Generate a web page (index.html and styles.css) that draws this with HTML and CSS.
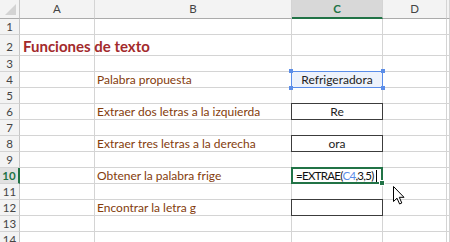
FILE: index.html
```html
<!DOCTYPE html>
<html lang="es">
<head>
<meta charset="utf-8">
<title>Funciones de texto</title>
<link rel="stylesheet" href="styles.css">
</head>
<body>
<div class="sheet">
  <div class="corner"><span class="tri"></span></div>
  <div class="ch">A</div><div class="ch">B</div><div class="ch ch-on">C</div><div class="ch">D</div><div class="ch"></div>

  <div class="rh">1</div><div class="c"></div><div class="c"></div><div class="c"></div><div class="c"></div><div class="c"></div>
  <div class="rh r2">2</div><div class="c title">Funciones de texto</div><div class="c"></div><div class="c"></div><div class="c"></div><div class="c"></div>
  <div class="rh">3</div><div class="c"></div><div class="c"></div><div class="c"></div><div class="c"></div><div class="c"></div>
  <div class="rh">4</div><div class="c"></div><div class="c label">Palabra propuesta</div><div class="c val sel">Refrigeradora<i class="h h1"></i><i class="h h2"></i><i class="h h3"></i><i class="h h4"></i></div><div class="c"></div><div class="c"></div>
  <div class="rh">5</div><div class="c"></div><div class="c"></div><div class="c"></div><div class="c"></div><div class="c"></div>
  <div class="rh">6</div><div class="c"></div><div class="c label">Extraer dos letras a la izquierda</div><div class="c val box">Re</div><div class="c"></div><div class="c"></div>
  <div class="rh">7</div><div class="c"></div><div class="c"></div><div class="c"></div><div class="c"></div><div class="c"></div>
  <div class="rh">8</div><div class="c"></div><div class="c label">Extraer tres letras a la derecha</div><div class="c val box">ora</div><div class="c"></div><div class="c"></div>
  <div class="rh">9</div><div class="c"></div><div class="c"></div><div class="c"></div><div class="c"></div><div class="c"></div>
  <div class="rh rh-on">10</div><div class="c"></div><div class="c label">Obtener la palabra frige</div><div class="c active"><span class="f">=EXTRAE(<span class="ref">C4</span>,3,5)</span><span class="caret"></span><i class="fill"></i></div><div class="c"></div><div class="c"></div>
  <div class="rh">11</div><div class="c"></div><div class="c"></div><div class="c"></div><div class="c"></div><div class="c"></div>
  <div class="rh">12</div><div class="c"></div><div class="c label">Encontrar la letra g</div><div class="c val box"></div><div class="c"></div><div class="c"></div>
  <div class="rh">13</div><div class="c"></div><div class="c"></div><div class="c"></div><div class="c"></div><div class="c"></div>
  <div class="rh">14</div><div class="c"></div><div class="c"></div><div class="c"></div><div class="c"></div><div class="c"></div>
</div>
<svg class="pointer" width="13" height="19" viewBox="0 0 13 19" aria-hidden="true">
  <path d="M0.5 0.5 L0.5 15.5 L4 12.2 L6.6 18 L8.8 17 L6.3 11.3 L11 11.3 Z" fill="#fff" stroke="#000" stroke-width="1" stroke-linejoin="miter"/>
</svg>
</body>
</html>
```

FILE: styles.css
```css
html, body {
  margin: 0;
  padding: 0;
  background: #fff;
  overflow: hidden;
}
body {
  width: 450px;
  height: 242px;
  position: relative;
  font-family: Lato, "Open Sans", "Liberation Sans", sans-serif;
}
.sheet {
  display: grid;
  grid-template-columns: 20px 75px 197px 91px 64px 3px;
  grid-template-rows: 19px 16px 21px repeat(12, 16px);
}
.sheet > div {
  box-sizing: border-box;
  border-right: 1px solid #d4d4d4;
  border-bottom: 1px solid #d4d4d4;
  position: relative;
  white-space: nowrap;
  overflow: visible;
  font-size: 12px;
  line-height: 15px;
}
.corner {
  background: #f3f3f3;
  border-right-color: #c6c6c6 !important;
  border-bottom-color: #ababab !important;
}
.tri {
  position: absolute;
  right: 3px;
  bottom: 3px;
  width: 0;
  height: 0;
  border-left: 11px solid transparent;
  border-bottom: 11px solid #d3d3d3;
}
.ch {
  background: #f3f3f3;
  color: #444;
  text-align: center;
  font-size: 11.5px !important;
  line-height: 18px !important;
  border-right-color: #d4d4d4 !important;
  border-bottom-color: #ababab !important;
}
.ch-on {
  background: #d8d8d8;
  color: #217346;
  font-weight: bold;
  border-bottom: 2px solid #217346 !important;
  line-height: 17px !important;
}
.rh {
  background: #f3f3f3;
  color: #444;
  text-align: center;
  font-size: 11.5px !important;
  border-right-color: #c6c6c6 !important;
}
.r2 { line-height: 21px !important; padding-top: 1px; }
.rh-on {
  background: #e1e1e1;
  color: #217346;
  font-weight: bold;
  border-right: 2px solid #217346 !important;
}
.title {
  color: #a32a2c;
  font-weight: bold;
  font-size: 15px !important;
  line-height: 20px !important;
  padding-left: 3px;
  padding-top: 1px;
}
.label {
  color: #843c0c;
  padding-left: 2px;
}
.val {
  text-align: center;
  color: #222;
}
.box::after {
  content: "";
  position: absolute;
  left: -1px;
  top: -1px;
  right: -1px;
  bottom: -1px;
  border: 1px solid #3c3c3c;
}
.sel {
  background: #edf2fc;
}
.sel::after {
  content: "";
  position: absolute;
  left: -1px;
  top: -1px;
  right: -1px;
  bottom: -1px;
  border: 1px solid #5b8de8;
}
.h {
  position: absolute;
  width: 4px;
  height: 4px;
  background: #5b8de8;
  z-index: 2;
}
.h1 { left: -3px; top: -3px; }
.h2 { right: -3px; top: -3px; }
.h3 { left: -3px; bottom: -3px; }
.h4 { right: -3px; bottom: -3px; }
.active {
  z-index: 1;
}
.active::after {
  content: "";
  position: absolute;
  left: -1px;
  top: -1px;
  right: -1px;
  bottom: -1px;
  border: 2px solid #217346;
}
.f {
  color: #111;
  font-size: 11.5px;
  padding-left: 4px;
  letter-spacing: -0.7px;
}
.ref { color: #5b8de8; }
.caret {
  display: inline-block;
  width: 1px;
  height: 12px;
  background: #000;
  margin-left: 2px;
  vertical-align: -2px;
}
.fill {
  position: absolute;
  right: -3px;
  bottom: -3px;
  width: 4px;
  height: 4px;
  background: #217346;
  border: 1px solid #fff;
  z-index: 3;
}
.pointer {
  position: absolute;
  left: 393px;
  top: 186px;
}
```
